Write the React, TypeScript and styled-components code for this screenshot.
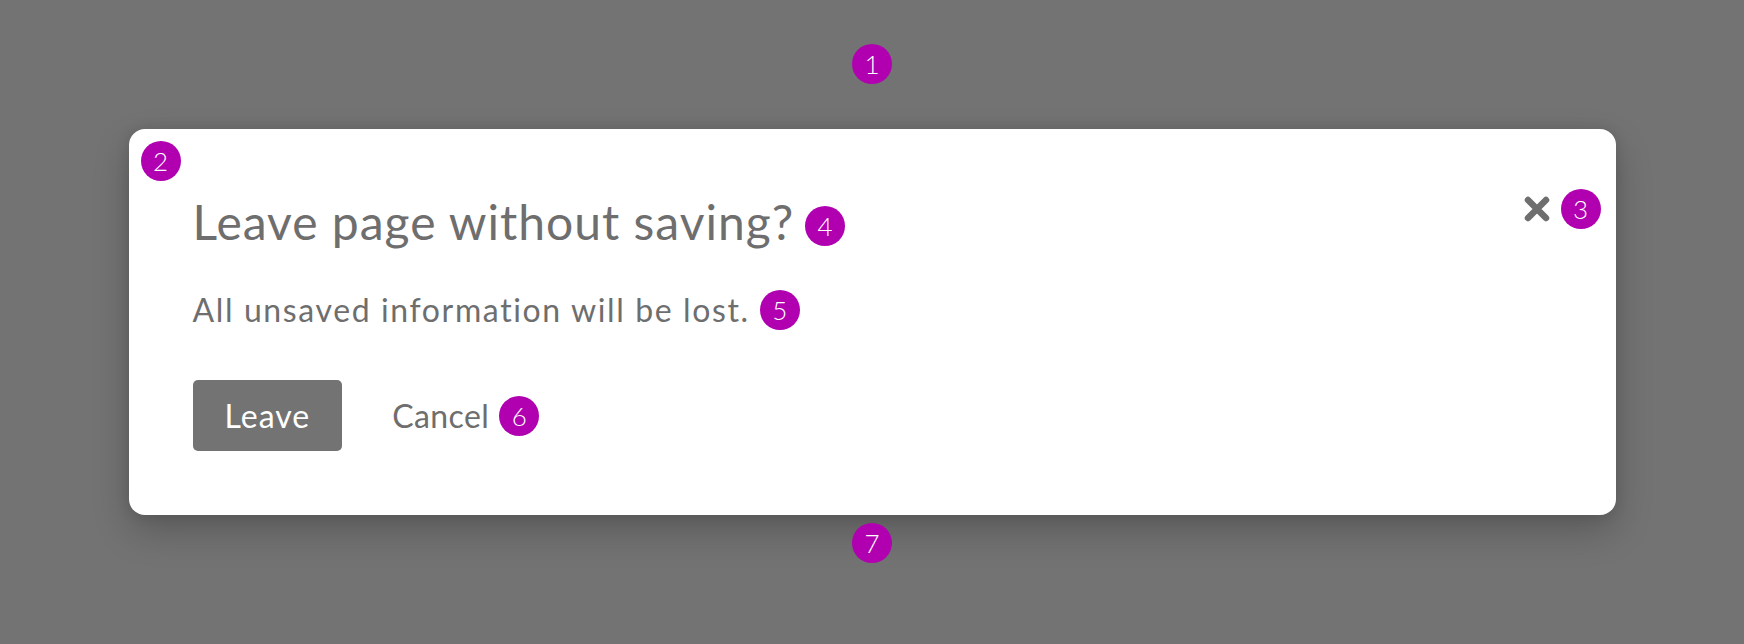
import React from "react";
import styled, { createGlobalStyle, css } from "styled-components";

const GlobalStyle = createGlobalStyle`
  html, body {
    margin: 0;
    padding: 0;
    background: #737373;
  }
  body {
    font-family: Lato, "Open Sans", "Liberation Sans", sans-serif;
    -webkit-font-smoothing: antialiased;
  }
  * { box-sizing: border-box; }
`;

const Backdrop = styled.div`
  min-height: 100vh;
  display: flex;
  align-items: center;
  justify-content: center;
  background: #737373;
`;

const ModalBox = styled.div`
  position: relative;
  width: 1487px;
  padding: 62px 64px 64px;
  background: #ffffff;
  border-radius: 16px;
  box-shadow: 0 16px 36px rgba(0, 0, 0, 0.22), 0 0 14px rgba(0, 0, 0, 0.1);
`;

type BadgePlace = "inline" | "above" | "below" | "corner";

const Badge = styled.span<{ $place?: BadgePlace; $nudge?: number }>`
  display: inline-flex;
  align-items: center;
  justify-content: center;
  flex: 0 0 auto;
  width: 40px;
  height: 40px;
  border-radius: 50%;
  background: #b000b0;
  color: #ffffff;
  font-family: Lato, "Open Sans", sans-serif;
  font-weight: 300;
  font-size: 26px;
  line-height: 1;
  letter-spacing: 0;
  margin-top: ${(p) => (p.$nudge ? `${p.$nudge}px` : "0")};
  ${(p) =>
    p.$place === "above" &&
    css`
      position: absolute;
      left: 50%;
      top: -85px;
      transform: translateX(-50%);
    `}
  ${(p) =>
    p.$place === "below" &&
    css`
      position: absolute;
      left: 50%;
      bottom: -48px;
      transform: translateX(-50%);
    `}
  ${(p) =>
    p.$place === "corner" &&
    css`
      position: absolute;
      left: 12px;
      top: 12px;
    `}
`;

const CloseWrap = styled.div`
  position: absolute;
  top: 60px;
  right: 15px;
  display: flex;
  align-items: center;
  gap: 11px;
`;

const CloseButton = styled.button`
  display: flex;
  align-items: center;
  justify-content: center;
  width: 26px;
  height: 26px;
  padding: 0;
  border: 0;
  background: transparent;
  color: #6e6e6e;
  cursor: pointer;
`;

const Title = styled.h1`
  display: flex;
  align-items: center;
  gap: 11px;
  margin: 0;
  font-family: Lato, "Open Sans", sans-serif;
  font-weight: 400;
  font-size: 48px;
  line-height: 62.4px;
  letter-spacing: 1px;
  color: #6e6e6e;
`;

const BodyText = styled.p`
  display: flex;
  align-items: center;
  gap: 10px;
  margin: 33.5px 0 0;
  font-size: 32px;
  line-height: 48px;
  letter-spacing: 1.62px;
  color: #6e6e6e;
`;

const Footer = styled.div`
  display: flex;
  align-items: center;
  gap: 50px;
  margin-top: 46px;
`;

const PrimaryButton = styled.button`
  height: 71px;
  padding: 0 32px;
  border: 0;
  border-radius: 5px;
  background: #737373;
  color: #ffffff;
  font-family: Lato, "Open Sans", sans-serif;
  font-size: 32px;
  line-height: 47px;
  letter-spacing: 1px;
  cursor: pointer;
`;

const LinkButton = styled.button`
  display: flex;
  align-items: center;
  gap: 10px;
  height: 71px;
  padding: 0;
  border: 0;
  background: transparent;
  color: #6e6e6e;
  font-family: Lato, "Open Sans", sans-serif;
  font-size: 32px;
  line-height: 47px;
  letter-spacing: 0.4px;
  cursor: pointer;
`;

const TimesIcon = () => (
  <svg width="26" height="26" viewBox="0 0 26 26" aria-hidden="true">
    <path
      d="M4 4 L22 22 M22 4 L4 22"
      stroke="currentColor"
      strokeWidth="6.5"
      strokeLinecap="round"
      fill="none"
    />
  </svg>
);

export default function App() {
  return (
    <>
      <GlobalStyle />
      <Backdrop>
        <ModalBox role="dialog" aria-modal="true">
          <Badge $place="above">1</Badge>
          <Badge $place="corner">2</Badge>
          <CloseWrap>
            <CloseButton aria-label="Close">
              <TimesIcon />
            </CloseButton>
            <Badge>3</Badge>
          </CloseWrap>
          <Title>
            Leave page without saving?
            <Badge $nudge={8}>4</Badge>
          </Title>
          <BodyText>
            All unsaved information will be lost.
            <Badge>5</Badge>
          </BodyText>
          <Footer>
            <PrimaryButton>Leave</PrimaryButton>
            <LinkButton>
              Cancel
              <Badge>6</Badge>
            </LinkButton>
          </Footer>
          <Badge $place="below">7</Badge>
        </ModalBox>
      </Backdrop>
    </>
  );
}
